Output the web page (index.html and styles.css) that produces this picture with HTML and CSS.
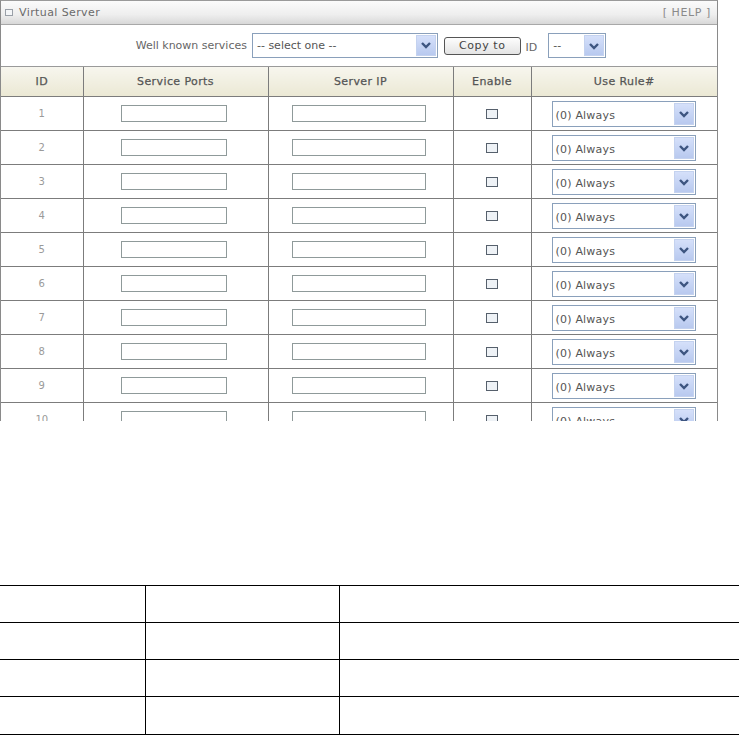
FILE: index.html
```html
<!DOCTYPE html>
<html>
<head>
<meta charset="utf-8">
<link rel="stylesheet" href="styles.css">
</head>
<body>
<div class="panel">
  <div class="titlebar">
    <span class="title"><span class="sq"></span>Virtual Server</span>
    <span class="help">[ HELP ]</span>
  </div>
  <div class="toolbar">
    <span class="lbl">Well known services</span>
    <span class="sel sel-wide"><span class="val">-- select one --</span><span class="arr"><svg width="12" height="8" viewBox="0 0 12 8"><path d="M2 2 L6 6 L10 2" fill="none" stroke="#3d5580" stroke-width="2.4"/></svg></span></span>
    <span class="btn">Copy to</span>
    <span class="lbl id">ID</span>
    <span class="sel sel-id"><span class="val">--</span><span class="arr"><svg width="12" height="8" viewBox="0 0 12 8"><path d="M2 2 L6 6 L10 2" fill="none" stroke="#3d5580" stroke-width="2.4"/></svg></span></span>
  </div>
  <table class="grid">
    <colgroup><col class="c1"><col class="c2"><col class="c3"><col class="c4"><col class="c5"></colgroup>
    <thead>
      <tr><th>ID</th><th>Service Ports</th><th>Server IP</th><th>Enable</th><th>Use Rule#</th></tr>
    </thead>
    <tbody id="rows"></tbody>
  </table>
</div>

<table class="blank">
  <colgroup><col class="b1"><col class="b2"><col class="b3"></colgroup>
  <tr><td></td><td></td><td></td></tr>
  <tr><td></td><td></td><td></td></tr>
  <tr><td></td><td></td><td></td></tr>
  <tr><td></td><td></td><td></td></tr>
</table>
<script src="app.js"></script>
</body>
</html>
```
FILE: app.js
```js
var tb = document.getElementById('rows');
var html = '';
for (var i = 1; i <= 10; i++) {
  html += '<tr><td class="num">' + i + '</td>' +
    '<td><span class="inp inp-port"></span></td>' +
    '<td><span class="inp inp-ip"></span></td>' +
    '<td><span class="chk"></span></td>' +
    '<td><span class="sel sel-rule"><span class="val">(0) Always</span><span class="arr"><svg width="12" height="8" viewBox="0 0 12 8"><path d="M2 2 L6 6 L10 2" fill="none" stroke="#3d5580" stroke-width="2.4"/></svg></span></span></td></tr>';
}
tb.innerHTML = html;
```
FILE: styles.css
```css
html, body { margin: 0; padding: 0; background: #fff; }
body { width: 739px; height: 735px; overflow: hidden; font-family: "DejaVu Sans", Verdana, sans-serif; }

.panel {
  width: 716px;
  height: 420px;
  overflow: hidden;
  border-left: 1px solid #8a8a8a;
  border-right: 1px solid #8a8a8a;
  border-top: 1px solid #9a9a9a;
  box-sizing: content-box;
}

.titlebar {
  height: 23px;
  display: flex;
  align-items: center;
  justify-content: space-between;
  padding: 0 6px 0 4px;
  background: linear-gradient(#fbfbfb, #eeeeee 60%, #d8d8d8);
  border-bottom: 1px solid #a8a8a8;
  font-size: 11px;
  color: #6a6a6a;
}
.title { display: flex; align-items: center; letter-spacing: 0.4px; }
.sq { width: 6px; height: 5px; border: 1px solid #9aa0a8; margin-right: 6px; background: #f4f6f8; }
.help { color: #8a8a8a; letter-spacing: 0.6px; }

.toolbar {
  height: 41px;
  display: flex;
  align-items: center;
  justify-content: center;
  padding-left: 24px;
  border-bottom: 1px solid #9a9a9a;
  font-size: 11px;
  color: #666;
}
.lbl { margin-right: 5px; }
.lbl.id { margin: 4px 11px 0 5px; }

.sel {
  display: flex;
  align-items: center;
  justify-content: space-between;
  border: 1px solid #8aa0bb;
  background: #fff;
  box-sizing: border-box;
  color: #555;
  font-size: 11px;
}
.val { padding-left: 4px; }
.arr {
  width: 18px;
  align-self: stretch;
  margin: 1px;
  display: flex;
  align-items: center;
  justify-content: center;
  background: linear-gradient(#d5e0fa, #b8c9ef);
  border: 1px solid #c4d2ef;
}
.sel-wide { width: 186px; height: 25px; margin-bottom: 1px; }
.sel-id { width: 58px; height: 25px; }
.sel-rule { width: 144px; height: 26px; margin-left: 20px; font-size: 11px; }
.sel-rule .val { padding-top: 4px; padding-left: 3px; letter-spacing: 0.2px; }

.btn {
  display: inline-block;
  margin-left: 6px;
  padding: 0 14px;
  height: 16px;
  line-height: 15px;
  border: 1px solid #555;
  border-radius: 3px;
  background: linear-gradient(#fdfdfd, #e4e4e4);
  color: #444;
  font-size: 11px;
  letter-spacing: 0.6px;
}

.grid {
  border-collapse: collapse;
  table-layout: fixed;
  width: 716px;
  font-size: 11px;
}
.c1 { width: 82px; } .c2 { width: 185px; } .c3 { width: 185px; } .c4 { width: 78px; } .c5 { width: 186px; }
.grid th, .grid td {
  border: 1px solid #7c7c7c;
  padding: 0;
  text-align: center;
}
.grid tr > :first-child { border-left: none; }
.grid tr > :last-child { border-right: none; }
.grid thead th {
  height: 29px;
  border-top: none;
  background: linear-gradient(#f7f6ee, #ebe8d4);
  font-weight: normal;
  color: #555;
  -webkit-text-stroke: 0.25px #555;
  letter-spacing: 0.4px;
}
.grid tbody td { height: 33px; }
.grid td.num { color: #9a9a9a; font-size: 10px; }
.grid td:nth-child(5) { text-align: left; }

.inp {
  display: inline-block;
  vertical-align: middle;
  height: 17px;
  border: 1px solid #8f9a9a;
  background: #fff;
  box-sizing: border-box;
}
.inp-port { width: 106px; margin-right: 3px; }
.inp-ip { width: 134px; margin-right: 3px; }
.chk {
  display: inline-block;
  vertical-align: middle;
  width: 12px;
  height: 10px;
  border: 1px solid #56606c;
  background: #eef2f6;
  box-sizing: border-box;
}

.blank {
  margin-top: 164px;
  border-collapse: collapse;
  table-layout: fixed;
  width: 739px;
}
.b1 { width: 145px; } .b2 { width: 194px; } .b3 { width: 400px; }
.blank td { border: 1px solid #000; height: 36px; padding: 0; }
.blank tr > :first-child { border-left: none; }
.blank tr:last-child td { height: 37px; }
```
